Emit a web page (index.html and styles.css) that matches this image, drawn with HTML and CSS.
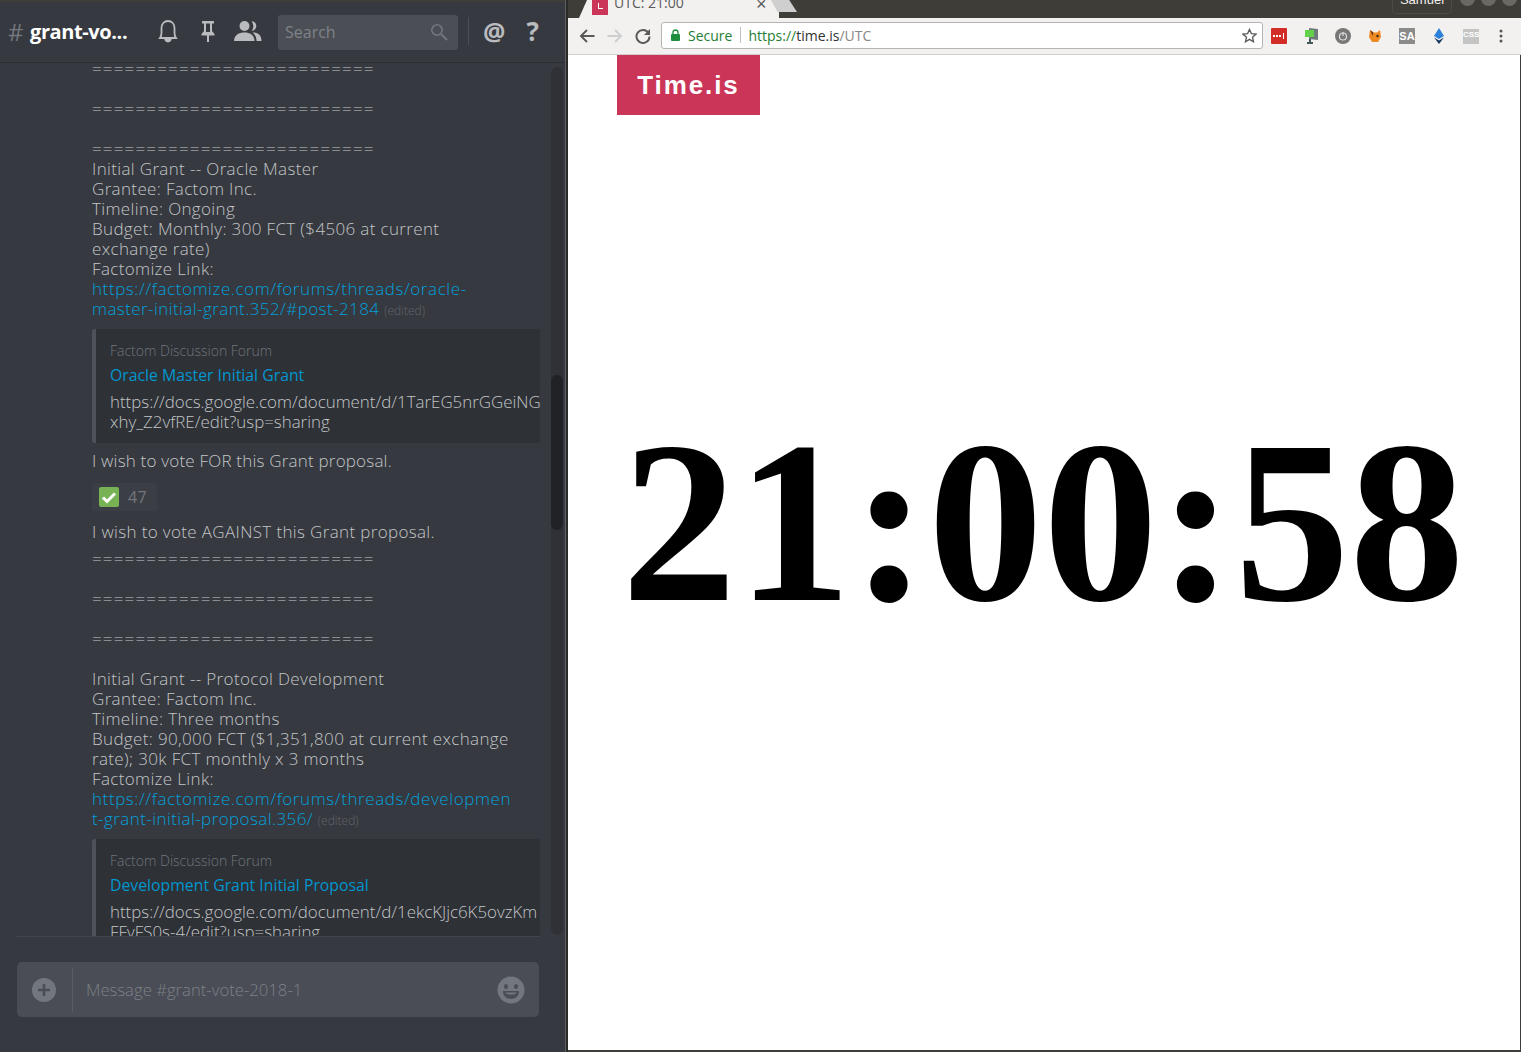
FILE: index.html
```html
<!DOCTYPE html>
<html lang="en">
<head>
  <meta charset="UTF-8">
  <title>UTC: 21:00</title>
  <link rel="stylesheet" href="styles.css">
</head>
<body>
  <div class="chat">
    <div class="top-strip"></div>
    <header class="chat-header">
      <span class="hash">#</span>
      <span class="channel">grant-vo...</span>
      <svg class="hicon bell" width="24" height="24" viewBox="0 0 24 24"><path d="M4 19 Q5.500 17 5.500 14 V9 C5.500 5 8 2 12 2 S18.500 5 18.500 9 V14 Q18.500 17 20 19 Z M9.500 21 H14.500 Q14 22.500 12 22.500 T9.500 21 Z" fill="none" stroke="#b9bbbe" stroke-width="1.800"/></svg>
      <svg class="hicon pin" width="18" height="24" viewBox="0 0 18 24"><path d="M3 2 H15 V4.500 H13 V12 L15.500 15 V16.500 H10 V23 H8 V16.500 H2.500 V15 L5 12 V4.500 H3 Z M7 4.500 V13 H11 V4.500 Z" fill="#b9bbbe" fill-rule="evenodd"/></svg>
      <svg class="hicon people" width="28" height="22" viewBox="0 0 28 22"><circle cx="10.500" cy="6" r="5" fill="#b9bbbe"/><path d="M0 21 C0 15 5 12.500 10.500 12.500 S20.500 15 20.500 21 Z" fill="#b9bbbe"/><path d="M17.500 1.200 A4.800 4.800 0 0 1 17.500 10.800 A7 7 0 0 0 17.500 1.200 Z M18.500 12.500 C24 12.500 27.500 15 27.500 21 H22.500 C22.500 17 21 14.500 18.500 12.500 Z" fill="#b9bbbe"/></svg>
      <div class="search">
        <span>Search</span>
        <svg width="18" height="18" viewBox="0 0 18 18"><circle cx="7" cy="7" r="5.200" fill="none" stroke="#72767d" stroke-width="1.600"/><path d="M11 11 L17 17" stroke="#72767d" stroke-width="2"/></svg>
      </div>
      <div class="hdivider"></div>
      <span class="hglyph at">@</span>
      <span class="hglyph help">?</span>
    </header>

    <div class="messages">
      <div class="scroll-col">
        <p class="eq">==========================</p>
        <p class="blank">&nbsp;</p>
        <p class="eq">==========================</p>
        <p class="blank">&nbsp;</p>
        <p class="eq">==========================</p>
        <p>Initial Grant -- Oracle Master<br>Grantee: Factom Inc.<br>Timeline: Ongoing<br>Budget: Monthly: 300 FCT ($4506 at current<br>exchange rate)<br>Factomize Link:<br><a href="#">https://factomize.com/forums/threads/oracle-<br><span class="link-tail">master-initial-grant.352/#post-2184</span></a> <span class="edited">(edited)</span></p>
        <div class="embed">
          <div class="embed-site">Factom Discussion Forum</div>
          <div class="embed-title">Oracle Master Initial Grant</div>
          <div class="embed-text">https://docs.google.com/document/d/1TarEG5nrGGeiNG<br>xhy_Z2vfRE/edit?usp=sharing</div>
        </div>
        <p class="vote">I wish to vote FOR this Grant proposal.</p>
        <div class="reaction">
          <svg width="20" height="20" viewBox="0 0 20 20"><rect width="20" height="20" rx="2" fill="#77b255"/><path d="M4 10.500 L8 14.500 L16 6.500" fill="none" stroke="#fff" stroke-width="3"/></svg>
          <span>47</span>
        </div>
        <p class="vote-against">I wish to vote AGAINST this Grant proposal.</p>
        <p class="eq eq-first">==========================</p>
        <p class="blank">&nbsp;</p>
        <p class="eq">==========================</p>
        <p class="blank">&nbsp;</p>
        <p class="eq">==========================</p>
        <p class="blank">&nbsp;</p>
        <p>Initial Grant -- Protocol Development<br>Grantee: Factom Inc.<br>Timeline: Three months<br>Budget: 90,000 FCT ($1,351,800 at current exchange<br>rate); 30k FCT monthly x 3 months<br>Factomize Link:<br><a href="#">https://factomize.com/forums/threads/developmen<br><span class="link-tail">t-grant-initial-proposal.356/</span></a> <span class="edited">(edited)</span></p>
        <div class="embed">
          <div class="embed-site">Factom Discussion Forum</div>
          <div class="embed-title">Development Grant Initial Proposal</div>
          <div class="embed-text">https://docs.google.com/document/d/1ekcKJjc6K5ovzKm<br>FFvFS0s-4/edit?usp=sharing</div>
        </div>
      </div>
      <div class="scrollbar"><div class="thumb"></div></div>
      <div class="messages-rule"></div>
    </div>

    <div class="composer">
      <div class="input-box">
        <svg class="plus" width="26" height="26" viewBox="0 0 26 26"><circle cx="13" cy="13" r="12" fill="#72767d"/><path d="M13 7 V19 M7 13 H19" stroke="#4a4d55" stroke-width="2.500"/></svg>
        <div class="input-divider"></div>
        <span class="placeholder">Message #grant-vote-2018-1</span>
        <svg class="smile" width="28" height="28" viewBox="0 0 28 28"><circle cx="14" cy="14" r="13.500" fill="#72767d"/><ellipse cx="9" cy="10.500" rx="2" ry="2.500" fill="#4a4d55"/><ellipse cx="19" cy="10.500" rx="2" ry="2.500" fill="#4a4d55"/><path d="M6 15 H22 C22 20 18.500 23 14 23 S6 20 6 15 Z" fill="#4a4d55"/><path d="M8.500 16.500 H19.500 Q19 18.500 14 18.500 T8.500 16.500 Z" fill="#72767d"/></svg>
      </div>
    </div>
  </div>

  <div class="gap"></div>

  <div class="browser">
    <div class="tabstrip">
      <div class="tab">
        <span class="favicon"><span></span></span>
        <span class="tab-title">UTC: 21:00</span>
        <span class="tab-close">&#215;</span>
      </div>
      <div class="new-tab"></div>
      <div class="user-chip">Samuel</div>
      <div class="win-buttons"><i></i><i></i><i></i></div>
    </div>
    <div class="toolbar">
      <svg class="nav" width="16" height="16" viewBox="0 0 16 16"><path d="M15.500 8 H2 M8 2 L2 8 L8 14" fill="none" stroke="#5a5a5a" stroke-width="2"/></svg>
      <svg class="nav" width="16" height="16" viewBox="0 0 16 16"><path d="M.5 8 H14 M8 2 L14 8 L8 14" fill="none" stroke="#cfcfcf" stroke-width="2"/></svg>
      <svg class="nav" width="16" height="16" viewBox="0 0 16 16"><path d="M13.500 5 A6.500 6.500 0 1 0 14.500 8.500" fill="none" stroke="#5a5a5a" stroke-width="2"/><path d="M15 1 V7 H9 Z" fill="#5a5a5a"/></svg>
      <div class="omnibox">
        <svg width="9" height="12" viewBox="0 0 9 12"><path d="M2 5 V3.500 A2.500 2.500 0 0 1 7 3.500 V5" fill="none" stroke="#1e8e3e" stroke-width="1.300"/><rect y="5" width="9" height="7" rx="1" fill="#1e8e3e"/></svg>
        <span class="secure">Secure</span>
        <span class="omni-sep"></span>
        <span class="url"><span class="scheme">https://</span><span class="host">time.is</span><span class="path">/UTC</span></span>
        <svg class="star" width="15" height="15" viewBox="0 0 16 16"><path d="M8 1.500 L10 6 L15 6.500 L11.200 9.800 L12.300 14.700 L8 12.100 L3.700 14.700 L4.800 9.800 L1 6.500 L6 6 Z" fill="none" stroke="#5a5a5a" stroke-width="1.400"/></svg>
      </div>
      <div class="extensions">
        <svg width="16" height="16" viewBox="0 0 16 16"><rect width="16" height="16" rx="1" fill="#d32d27"/><path d="M2 7 h2 v2 h-2 z M5 7 h2 v2 h-2 z M8 7 h2 v2 h-2 z" fill="#fff"/><path d="M12.500 5 V11" stroke="#fff"/></svg>
        <svg width="16" height="16" viewBox="0 0 16 16"><path d="M6 0 L15 1 V12 L6 11 Z" fill="#6f7b7b"/><rect x="2" y="2" width="9" height="7" fill="#63d04a"/><path d="M7 11 V14 M4 15 H10" stroke="#44585a" stroke-width="2"/></svg>
        <svg width="16" height="16" viewBox="0 0 16 16"><circle cx="8" cy="8" r="8" fill="#777"/><circle cx="8" cy="8.500" r="3.500" fill="none" stroke="#ddd" stroke-width="1.200"/><path d="M8 4 V8" stroke="#ddd" stroke-width="1.200"/></svg>
        <svg width="16" height="16" viewBox="0 0 16 16"><path d="M3 2 L6.500 4.500 H10 L13 2 L14 9 L11 14 H5 L2 9 Z" fill="#ee8a24"/><path d="M3 2 L6.500 4.500 L5.500 8 Z" fill="#763d16"/><circle cx="10.500" cy="8" r="1.200" fill="#3a2a1a"/></svg>
        <span class="ext-sa">SA</span>
        <svg width="16" height="16" viewBox="0 0 16 16"><path d="M8 0 L13 8 L8 11 L3 8 Z" fill="#2f80d8"/><path d="M3 9.500 L8 12.500 L13 9.500 L8 16 Z" fill="#17365e"/></svg>
        <span class="ext-css">CSS</span>
        <svg class="kebab" width="4" height="14" viewBox="0 0 4 14"><circle cx="2" cy="2" r="1.500" fill="#555"/><circle cx="2" cy="7" r="1.500" fill="#555"/><circle cx="2" cy="12" r="1.500" fill="#555"/></svg>
      </div>
    </div>
    <div class="page">
      <div class="logo">Time.is</div>
      <div class="clock">21:00:58</div>
    </div>
  </div>
</body>
</html>
```

FILE: styles.css
```css
* {
  box-sizing: border-box;
}

html, body {
  height: 100%;
}

body {
  margin: 0;
  display: flex;
  height: 1052px;
  overflow: hidden;
  background-color: #3e3d38;
  font-family: 'Open Sans', sans-serif;
}

/* chat panel */
.chat {
  width: 565px;
  height: 1052px;
  display: flex;
  flex-direction: column;
  background-color: #36393f;
  color: #b9bbbe;
}

.top-strip {
  height: 2px;
  background-color: #3f3e38;
}

.chat-header {
  height: 61px;
  display: flex;
  align-items: center;
  padding: 0 0 2px 8px;
  border-bottom: 1px solid #2c2e33;
}

.hash {
  font-size: 24px;
  color: #72767d;
  width: 22px;
}

.channel {
  width: 126px;
  font-size: 20px;
  font-weight: 700;
  letter-spacing: -.4px;
  color: #fff;
}

.hicon {
  flex: none;
}

.pin {
  margin-left: 19px;
}

.people {
  margin: 0 0 0 17px;
}

.search {
  width: 180px;
  height: 35px;
  margin: 2px 0 0 16px;
  padding: 0 10px 0 7px;
  display: flex;
  align-items: center;
  justify-content: space-between;
  background-color: #4b4e54;
  border-radius: 3px;
  color: #7f8389;
  font-size: 16px;
}

.hdivider {
  width: 1px;
  height: 28px;
  margin-left: 10px;
  background-color: #4b4e54;
}

.hglyph {
  font-weight: 700;
  color: #b9bbbe;
  line-height: 1;
}

.at {
  margin-left: 14px;
  font-size: 25px;
}

.help {
  margin-left: 21px;
  font-size: 26px;
}

.messages {
  position: relative;
  height: 874px;
  padding-left: 92px;
  overflow: hidden;
}

.messages-rule {
  position: absolute;
  left: 16px;
  bottom: 0;
  width: 524px;
  height: 1px;
  background-color: #42454b;
}

.scroll-col {
  width: 448px;
  margin-top: -4px;
  font-size: 17px;
  line-height: 20px;
  font-weight: 300;
  letter-spacing: .35px;
  color: #c3c5c8;
}

.scroll-col p {
  margin: 0;
}

.scroll-col .eq {
  letter-spacing: 1.170px;
}

.scroll-col a {
  color: #00a0dc;
  letter-spacing: .58px;
  text-decoration: none;
}

.link-tail {
  letter-spacing: .42px;
}

.edited {
  font-size: 12px;
  letter-spacing: 0;
  color: #62656b;
}

.embed {
  height: 114px;
  margin-top: 8px;
  padding: 12px 0 0 14px;
  border-left: 4px solid #4e5158;
  border-radius: 3px 0 0 3px;
  background-color: #2e3136;
  overflow: hidden;
  white-space: nowrap;
  letter-spacing: 0;
}

.embed-site {
  font-size: 14px;
  line-height: 20px;
  color: #72767d;
}

.embed-title {
  margin-top: 4px;
  font-size: 15.800px;
  line-height: 20px;
  font-weight: 400;
  color: #0096cf;
}

.embed-text {
  margin-top: 7px;
  font-size: 16.900px;
  line-height: 20px;
}

.scroll-col .vote {
  margin-top: 8px;
  letter-spacing: .2px;
}

.reaction {
  width: 65px;
  height: 28px;
  margin-top: 12px;
  padding-left: 7px;
  display: flex;
  align-items: center;
  gap: 9px;
  background-color: #3b3e45;
  border-radius: 3px;
  color: #72767d;
  font-size: 16px;
  font-weight: 400;
}

.scroll-col .vote-against {
  margin-top: 11px;
}

.scroll-col .eq-first {
  margin-top: 7px;
}

.scrollbar {
  position: absolute;
  right: 2px;
  top: 4px;
  bottom: 2px;
  width: 12px;
  background-color: #2f3136;
  border-radius: 6px;
}

.thumb {
  position: absolute;
  left: 0;
  top: 308px;
  width: 12px;
  height: 155px;
  background-color: #202225;
  border-radius: 6px;
}

.composer {
  flex: 1;
  padding: 25px 26px 0 17px;
}

.input-box {
  height: 55px;
  display: flex;
  align-items: center;
  padding-left: 14px;
  background-color: #4a4d55;
  border-radius: 5px;
}

.input-divider {
  width: 1px;
  height: 44px;
  margin-left: 15px;
  background-color: #5a5d64;
}

.placeholder {
  flex: 1;
  margin-left: 13px;
  color: #7c8087;
  font-size: 16.700px;
  font-weight: 300;
}

.smile {
  margin-right: 14px;
}

.gap {
  width: 3px;
  background: linear-gradient(to right, #5f6064 1px, #2a2a28 1px);
}

/* browser window */
.browser {
  flex: 1;
  height: 1052px;
  display: flex;
  flex-direction: column;
  font-family: 'Liberation Sans', Arial, sans-serif;
}

.tabstrip {
  position: relative;
  height: 18px;
  flex: none;
  display: flex;
  background-color: #3e3d38;
  overflow: hidden;
}

.tab {
  width: 200px;
  margin-left: 11px;
  display: flex;
  align-items: center;
  padding-left: 13px;
  background-color: #f2f1f0;
  clip-path: polygon(0 100%, 8px 0, 100% 0, 100% 100%);
}

.favicon {
  width: 16px;
  height: 24px;
  margin-top: -12px;
  background-color: #cb3558;
  position: relative;
}

.favicon span {
  position: absolute;
  left: 6px;
  top: 12px;
  width: 5px;
  height: 6px;
  border-left: 1px solid #fff;
  border-bottom: 1px solid #fff;
}

.tab-title {
  margin-left: 6px;
  margin-top: -13px;
  font-size: 14px;
  line-height: 24px;
  width: 142px;
  color: #5a5a5a;
  font-family: 'Open Sans', sans-serif;
}

.tab-close {
  margin-top: -10px;
  font-size: 18px;
  color: #5a5a5a;
}

.new-tab {
  width: 26px;
  height: 12px;
  margin-left: -8px;
  background-color: #cfcfcf;
  clip-path: polygon(0 0, 70% 0, 100% 100%, 25% 100%);
}

.user-chip {
  position: absolute;
  left: 824px;
  top: -9px;
  width: 60px;
  height: 23px;
  border: 1px solid #4c4b46;
  border-radius: 4px;
  color: #f2f1f0;
  font-size: 13px;
  text-align: center;
}

.win-buttons {
  position: absolute;
  right: 4px;
  top: -9px;
  display: flex;
  gap: 6px;
}

.win-buttons i {
  width: 15px;
  height: 15px;
  border-radius: 50%;
  background-color: #6a6964;
}

.toolbar {
  height: 37px;
  flex: none;
  display: flex;
  align-items: center;
  padding-left: 11px;
  gap: 12px;
  background-color: #f2f1f0;
  border-bottom: 1px solid #cfcfcf;
}

.omnibox {
  width: 602px;
  height: 27px;
  margin: -1px 0 0 -2px;
  display: flex;
  align-items: center;
  padding: 0 0 1px 9px;
  background-color: #fff;
  border: 1px solid #b4b4b4;
  border-radius: 3px;
  font-family: 'Open Sans', sans-serif;
  font-size: 14px;
}

.secure {
  margin-left: 8px;
  color: #1e7e34;
}

.omni-sep {
  width: 1px;
  height: 16px;
  margin: 0 7px 0 8px;
  background-color: #c0c0c0;
}

.url {
  flex: 1;
  color: #888;
}

.scheme {
  color: #1e7e34;
}

.host {
  color: #333;
}

.star {
  margin-right: 5px;
}

.extensions {
  display: flex;
  align-items: center;
  gap: 16px;
  margin-left: -4px;
}

.kebab {
  margin-left: 4px;
}

.ext-sa {
  width: 16px;
  height: 16px;
  background-color: #8a8a8a;
  color: #fff;
  font-size: 11px;
  font-weight: 700;
  line-height: 16px;
  text-align: center;
}

.ext-css {
  width: 16px;
  height: 15px;
  background-color: #c4c4c4;
  color: #fff;
  font-size: 8px;
  font-weight: 700;
  line-height: 12px;
  text-align: center;
}

.page {
  flex: 1;
  background-color: #fff;
  border-bottom: 2px solid #3e3d38;
  border-right: 1px solid #3e3d38;
}

.logo {
  width: 143px;
  height: 60px;
  margin-left: 49px;
  background-color: #cb3558;
  color: #fff;
  font-size: 26px;
  font-weight: 700;
  letter-spacing: 1.900px;
  line-height: 60px;
  text-align: center;
}

.clock {
  margin-top: 308px;
  padding-right: 2px;
  font-family: 'Liberation Serif', 'Times New Roman', serif;
  font-weight: 700;
  font-size: 230px;
  line-height: 200px;
  color: #000;
  text-align: center;
  white-space: nowrap;
}
```
